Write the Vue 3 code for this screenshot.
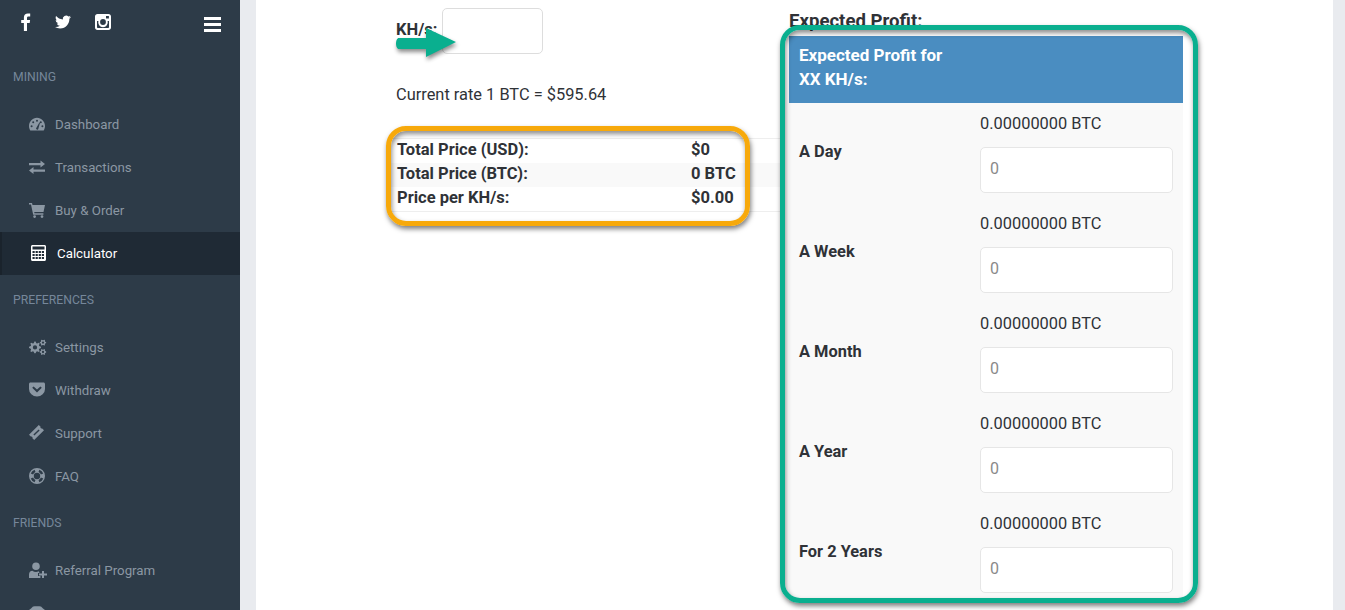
<script setup>
const circle = (x, y, r) => `M${x - r} ${y}a${r} ${r} 0 1 0 ${2 * r} 0a${r} ${r} 0 1 0 ${-2 * r} 0Z`

// cog outline with a round hole
function gear(cx, cy, r, teeth) {
  const pts = []
  const n = teeth * 4
  for (let i = 0; i < n; i++) {
    const a = ((i - 0.5) / n) * Math.PI * 2
    const rr = i % 4 < 2 ? r : r * 0.74
    pts.push(`${(cx + Math.cos(a) * rr).toFixed(2)} ${(cy + Math.sin(a) * rr).toFixed(2)}`)
  }
  return `M${pts.join('L')}Z` + circle(cx, cy, r * 0.36)
}

function calculator() {
  let d = 'M1.5 0H13.5C14.3 0 15 .7 15 1.5V14.5C15 15.3 14.3 16 13.5 16H1.5C.7 16 0 15.3 0 14.5V1.5C0 .7.7 0 1.5 0Z'
  d += 'M1.5 1.5H13.5V4.5H1.5Z'
  for (const y of [6, 9, 12]) {
    for (const x of [1.5, 4.6, 7.7, 10.8]) d += `M${x} ${y}h2.2v2h-2.2Z`
  }
  return d
}

// ring slice, used for the gaps of the life ring
function slice(cx, cy, r1, r2, deg) {
  const a = ((deg - 24) * Math.PI) / 180
  const b = ((deg + 24) * Math.PI) / 180
  const p = (r, t) => `${(cx + Math.cos(t) * r).toFixed(2)} ${(cy + Math.sin(t) * r).toFixed(2)}`
  return `M${p(r2, a)}A${r2} ${r2} 0 0 1 ${p(r2, b)}L${p(r1, b)}A${r1} ${r1} 0 0 0 ${p(r1, a)}Z`
}

const icons = {
  dashboard: 'M1.3 14.5C.5 13.2 0 11.6 0 10 0 5.4 3.6 1.7 8 1.7s8 3.7 8 8.3c0 1.6-.5 3.2-1.3 4.5Z' +
    circle(2.6, 10.2, 1) + circle(4.2, 6.3, 1) + circle(8, 4.7, 1) + circle(13.4, 10.2, 1) + circle(11.8, 6.3, 1) +
    'M7 12.6 10.4 6.4 11 6.7 9.2 13.2A1.4 1.4 0 0 1 7 12.6Z',
  exchange: 'M0 4H11.5V1.5L16 5 11.5 8.5V6.2H0ZM16 10.5H4.5V8L0 11.5 4.5 15V12.7H16Z',
  cart: 'M0 1H3L3.5 3H16L14.5 10H5.2L5.5 11.3H14.4V12.8H4.2L2 2.5H0Z' + circle(5.6, 14.6, 1.4) + circle(13, 14.6, 1.4),
  calculator: calculator(),
  cogs: gear(6, 8.4, 6, 8) + gear(14, 3.6, 3.2, 6) + gear(14, 13, 3.2, 6),
  pocket: 'M1.5 .5H14.5C15.3 .5 16 1.2 16 2V7A8 7.5 0 0 1 0 7V2C0 1.2.7 .5 1.5 .5ZM4.6 4.4 3.2 5.8 8 10.4 12.8 5.8 11.4 4.4 8 7.6Z',
  ticket: 'M0 9.8 9.8 0 11.6 1.8C11 2.8 12.2 4 13.2 3.4L15 5.2 5.2 15 3.4 13.2C4 12.2 2.8 11 1.8 11.6ZM4.4 9.6 9.6 4.4 10.6 5.4 5.4 10.6Z',
  lifering: circle(8, 8, 8) + circle(8, 8, 3.2) + [45, 135, 225, 315].map(d => slice(8, 8, 4.2, 6.7, d)).join(''),
  userplus: circle(7, 4.2, 3.8) + 'M0 16V12.5C0 10.5 1.4 8.8 3.4 8.8 4.4 9.6 5.6 10 7 10 8 10 9 9.8 9.8 9.3L10.5 11H9V14H11.4V16ZM13 9H15V11.4H18.6V13.4H15V16H13V13.4H10V11.4H13Z',
  hat: 'M4 1.5C5 1 11 1 12 1.5L14 3.5 16 5V16H0V5L2 3.5Z',
  facebook: 'M6.5 18V10H9.2L9.6 6.9H6.5V4.9C6.5 4 6.8 3.4 8.1 3.4H9.7V.6C9.4.6 8.5.5 7.4.5 5 .5 3.4 2 3.4 4.6V6.9H.7V10H3.4V18Z',
  instagram: 'M2.5 0H13.5C14.9 0 16 1.1 16 2.5V13.5C16 14.9 14.9 16 13.5 16H2.5C1.1 16 0 14.9 0 13.5V2.5C0 1.1 1.1 0 2.5 0ZM2 7V13C2 13.6 2.4 14 3 14H13C13.6 14 14 13.6 14 13V7H12.6A4.8 4.8 0 1 1 3.4 7ZM11 2V4.5H13.9V2Z' + circle(8, 8, 2.9)
}

const groups = [
  { title: 'Mining', items: [
    { label: 'Dashboard', icon: 'dashboard' },
    { label: 'Transactions', icon: 'exchange' },
    { label: 'Buy & Order', icon: 'cart' },
    { label: 'Calculator', icon: 'calculator', active: true }
  ] },
  { title: 'Preferences', items: [
    { label: 'Settings', icon: 'cogs' },
    { label: 'Withdraw', icon: 'pocket' },
    { label: 'Support', icon: 'ticket' },
    { label: 'FAQ', icon: 'lifering' }
  ] },
  { title: 'Friends', items: [
    { label: 'Referral Program', icon: 'userplus' },
    // only the top of this icon is on screen, its label is below the fold
    { label: '', icon: 'hat' }
  ] }
]

const totals = [
  { label: 'Total Price (USD):', value: '$0' },
  { label: 'Total Price (BTC):', value: '0 BTC' },
  { label: 'Price per KH/s:', value: '$0.00' }
]

const periods = ['A Day', 'A Week', 'A Month', 'A Year', 'For 2 Years']
</script>

<template>
  <div class="page">
    <aside class="sidebar">
      <div class="top">
        <div class="social">
          <svg width="11" height="18" viewBox="0 0 10 18"><path :d="icons.facebook" /></svg>
          <svg width="16" height="16" viewBox="0 0 24 24"><path d="M23.953 4.57a10 10 0 01-2.825.775 4.958 4.958 0 002.163-2.723c-.951.555-2.005.959-3.127 1.184a4.92 4.92 0 00-8.384 4.482C7.69 8.095 4.067 6.13 1.64 3.162a4.822 4.822 0 00-.666 2.475c0 1.71.87 3.213 2.188 4.096a4.904 4.904 0 01-2.228-.616v.06a4.923 4.923 0 003.946 4.827 4.996 4.996 0 01-2.212.085 4.936 4.936 0 004.604 3.417 9.867 9.867 0 01-6.102 2.105c-.39 0-.779-.023-1.17-.067a13.995 13.995 0 007.557 2.209c9.053 0 13.998-7.496 13.998-13.985 0-.21 0-.42-.015-.63A9.935 9.935 0 0024 4.59z" /></svg>
          <svg width="16" height="16" viewBox="0 0 16 16"><path fill-rule="evenodd" :d="icons.instagram" /></svg>
        </div>
        <div class="burger"><span></span><span></span><span></span></div>
      </div>
      <section v-for="g in groups" :key="g.title">
        <h4>{{ g.title }}</h4>
        <a v-for="item in g.items" :key="item.icon" class="nav" :class="{ active: item.active }">
          <svg width="18" height="16" viewBox="0 0 18 16"><path fill-rule="evenodd" :d="icons[item.icon]" /></svg>
          <span>{{ item.label }}</span>
        </a>
      </section>
    </aside>

    <main class="card">
      <div class="left">
        <div class="rate-input">
          <label>KH/s:</label>
          <input type="text" />
        </div>
        <p class="rate">Current rate 1 BTC = $595.64</p>
        <table class="totals">
          <tr v-for="t in totals" :key="t.label">
            <td>{{ t.label }}</td>
            <td class="val">{{ t.value }}</td>
          </tr>
        </table>
      </div>

      <div class="right">
        <div class="heading">Expected Profit:</div>
        <div class="profit-head">Expected Profit for<br />XX KH/s:</div>
        <div v-for="p in periods" :key="p" class="profit-row">
          <strong>{{ p }}</strong>
          <div class="amount">
            <p>0.00000000 BTC</p>
            <input type="text" placeholder="0" />
          </div>
        </div>
      </div>

      <!-- annotations drawn over the screenshot -->
      <svg class="arrow" width="64" height="34" viewBox="0 0 64 34">
        <path d="M4 12H31V2L61 16 31 31V23H4C0 23 0 12 4 12Z" />
      </svg>
      <div class="mark orange"></div>
      <div class="mark green"></div>
    </main>
  </div>
</template>

<style>
html, body { margin: 0; overflow: hidden; background: #e9ebef; }
</style>

<style scoped>
.page {
  display: flex;
  height: 610px;
  overflow: hidden;
  font-family: Roboto, "Noto Sans", sans-serif;
  color: #2f3237;
}

.sidebar {
  width: 240px;
  flex-shrink: 0;
  background: #2d3b48;
  color: #8b97a3;
  font-size: 14px;
}
.top {
  height: 52px;
  box-sizing: border-box;
  padding: 13px 19px 0 20px;
  display: flex;
  justify-content: space-between;
}
.social { display: flex; gap: 24px; height: 18px; align-items: center; }
.social svg { fill: #fff; }
.burger { width: 17px; padding-top: 4px; }
.burger span { display: block; height: 3px; background: #fff; margin-bottom: 3px; }

h4 {
  margin: 0;
  height: 51px;
  box-sizing: border-box;
  padding: 17px 13px 0;
  font-size: 12.2px;
  line-height: 16px;
  font-weight: 400;
  text-transform: uppercase;
  color: #76879a;
}
.nav {
  height: 43px;
  box-sizing: border-box;
  padding: 0 0 1px 29px;
  display: flex;
  align-items: center;
  gap: 8px;
  font-size: 13.3px;
}
.nav svg { fill: #8b97a3; flex-shrink: 0; }
.nav.active {
  background: #1f2a35;
  color: #fff;
  border-left: 2px solid #1a232c;
}
.nav.active svg { fill: #fff; }

.card {
  position: relative;
  margin: 0 12px 0 16px;
  flex: 1;
  background: #fff;
  display: flex;
  gap: 9px;
  padding: 8px 0 0 134px;
  font-size: 16px;
}

.left { width: 390px; flex-shrink: 0; }
.rate-input {
  display: flex;
  align-items: center;
  padding-left: 6px;
}
.rate-input label { font-weight: 700; font-size: 16.5px; width: 46px; padding-bottom: 4px; }
.rate-input input {
  width: 101px;
  height: 46px;
  box-sizing: border-box;
  border: 1px solid #ddd;
  border-radius: 5px;
  background: #fff;
}
.rate {
  margin: 0;
  padding: 31px 0 0 6px;
  line-height: 20px;
  height: 53px;
  font-size: 16.4px;
}
.totals {
  width: 390px;
  border-collapse: collapse;
  font-weight: 700;
  font-size: 16.5px;
}
.totals td {
  box-sizing: border-box;
  padding: 0 0 3px 7px;
  height: 24px;
  line-height: 21px;
}
.totals tr:first-child td { border-top: 1px solid #eee; }
.totals tr:last-child td { border-bottom: 1px solid #eee; }
.totals tr:nth-child(2) { background: #f9f9f9; }
.totals .val { width: 89px; padding-left: 0; }

.right { width: 394px; flex-shrink: 0; }
.heading { height: 28px; line-height: 26px; font-weight: 700; font-size: 18.6px; }
.profit-head {
  height: 67px;
  box-sizing: border-box;
  padding: 7px 10px 0;
  line-height: 24px;
  background: #4a8dc1;
  color: #fff;
  font-weight: 700;
  font-size: 17px;
}
.profit-row {
  height: 100px;
  display: flex;
  align-items: center;
  background: #f9f9f9;
  padding: 0 10px;
  box-sizing: border-box;
}
.profit-row strong { width: 181px; flex-shrink: 0; margin-bottom: 4px; font-size: 16.4px; }
.amount p { margin: 0 0 13px; padding-top: 1px; line-height: 20px; font-size: 16.4px; }
.amount input {
  display: block;
  width: 193px;
  height: 46px;
  box-sizing: border-box;
  padding: 0 9px 3px;
  border: 1px solid #e6e6e6;
  border-radius: 5px;
  background: #fff;
  font: inherit;
}
.amount input::placeholder { color: #8a8a8a; }

.arrow {
  position: absolute;
  left: 139px;
  top: 26px;
  fill: #0aaf8f;
  filter: drop-shadow(1px 3px 2px rgba(0, 0, 0, 0.45));
}
.mark {
  position: absolute;
  box-sizing: border-box;
  border: 5px solid;
  border-radius: 20px;
  box-shadow: 1px 3px 5px rgba(0, 0, 0, 0.5), inset 1px 3px 5px rgba(0, 0, 0, 0.45);
  pointer-events: none;
}
.orange { left: 130px; top: 126px; width: 364px; height: 100px; border-color: #f7a90b; }
.green { left: 524px; top: 25px; width: 418px; height: 578px; border-color: #0aaf8f; }
</style>
